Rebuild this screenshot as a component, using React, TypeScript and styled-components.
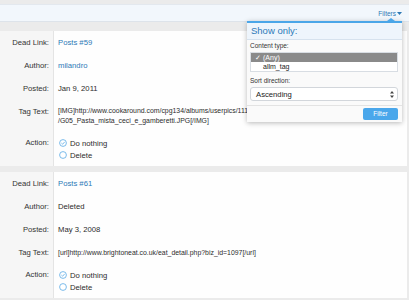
import * as React from "react"
import styled, { createGlobalStyle } from "styled-components"

const GlobalStyle = createGlobalStyle`
  html, body {
    margin: 0;
    padding: 0;
    background: #ebebeb;
    font-family: "Liberation Sans", Arial, sans-serif;
    color: #2c2c2c;
  }
`

const Styled = {
  Page: styled.div`
    position: relative;
    width: 409px;
    height: 300px;
    overflow: hidden;
    padding-top: 4px;
    box-sizing: border-box;
  `,
  FilterBar: styled.div`
    height: 18px;
    box-sizing: border-box;
    background: #f2f7fc;
    border-top: 1px solid #e3e8ee;
    border-bottom: 1px solid #dde3ea;
    display: flex;
    justify-content: flex-end;
    align-items: center;
    padding-right: 7px;
  `,
  FilterToggle: styled.span`
    font-size: 6.5px;
    color: #2d78b4;
    display: flex;
    align-items: center;
    gap: 1px;
  `,
  List: styled.div`
    display: flex;
    flex-direction: column;
    gap: 6px;
    padding-top: 9px;
    width: 407px;
  `,
  Block: styled.div`
    display: grid;
    grid-template-columns: 54px 1fr;
    background: #fefefe;
  `,
  Labels: styled.div`
    grid-column: 1;
    grid-row: 1;
    background: #f6f6f6;
    border-right: 1px solid #e4e4e4;
  `,
  Rows: styled.div`
    display: grid;
    grid-column: 1 / span 2;
    grid-row: 1;
    padding: 6px 0 5px;
  `,
  Row: styled.div<{ $gap: number }>`
    display: grid;
    grid-template-columns: 54px 1fr;
    margin-top: ${(p) => p.$gap}px;
    font-size: 7.7px;
    line-height: 11px;
  `,
  Label: styled.div<{ $tall?: boolean }>`
    text-align: right;
    padding-right: 5px;
    color: #333;
    line-height: ${(p) => (p.$tall ? "12px" : "11px")};
  `,
  Value: styled.div`
    padding-left: 4px;
    white-space: nowrap;
  `,
  TagText: styled.div<{ $tight?: boolean }>`
    padding-left: 4px;
    white-space: nowrap;
    font-size: 6.9px;
    line-height: ${(p) => (p.$tight ? "10px" : "11px")};
  `,
  Link: styled.span`
    color: #2b79b7;
  `,
  Radio: styled.div`
    display: flex;
    align-items: center;
    gap: 3px;
    height: 12px;
    padding-left: 1px;
  `,
  Popup: styled.div`
    position: absolute;
    left: 247px;
    top: 21px;
    width: 155px;
    background: #fafafa;
    border-top: 2px solid #4aa6e8;
    box-shadow: 0 1px 5px rgba(0, 0, 0, 0.28);
  `,
  Arrow: styled.div`
    position: absolute;
    right: 7px;
    top: -5px;
    width: 0;
    height: 0;
    border-left: 4px solid transparent;
    border-right: 4px solid transparent;
    border-bottom: 3px solid #4aa6e8;
  `,
  PopupHeader: styled.div`
    background: #eef5fc;
    border-bottom: 1px solid #d6e2ee;
    color: #2d7ab8;
    font-size: 9.5px;
    height: 16px;
    line-height: 16px;
    padding-left: 4px;
  `,
  PopupBody: styled.div`
    padding: 1px 4px 0 3px;
    display: flex;
    flex-direction: column;
  `,
  FieldTitle: styled.div<{ $top: number }>`
    font-size: 6.5px;
    color: #333;
    margin-top: ${(p) => p.$top}px;
    height: 9px;
    line-height: 9px;
  `,
  ListBox: styled.div`
    margin-top: 2px;
    height: 20px;
    box-sizing: border-box;
    background: #fff;
    border: 1px solid #d8dde3;
    font-size: 7px;
  `,
  Option: styled.div<{ $selected?: boolean }>`
    position: relative;
    height: 9px;
    line-height: 9px;
    padding-left: 12px;
    background: ${(p) => (p.$selected ? "#8a8a8a" : "#fff")};
    color: ${(p) => (p.$selected ? "#fff" : "#222")};
  `,
  Check: styled.span`
    position: absolute;
    left: 4px;
    top: 0;
  `,
  Select: styled.div`
    margin-top: 2px;
    height: 14px;
    box-sizing: border-box;
    background: #fff;
    border: 1px solid #d2d6db;
    border-radius: 3px;
    display: flex;
    align-items: center;
    justify-content: space-between;
    padding: 0 3px 0 5px;
    font-size: 7.7px;
    color: #222;
  `,
  Footer: styled.div`
    border-top: 1px solid #e3e3e3;
    margin-top: 4px;
    padding: 2px 4px 2px;
    display: flex;
    justify-content: flex-end;
  `,
  Button: styled.div`
    width: 35px;
    height: 12px;
    line-height: 12px;
    background: #4aa7eb;
    color: #fff;
    font-size: 6.5px;
    text-align: center;
    border-radius: 2px;
  `,
}

const RadioIcon = ({ checked }: { checked?: boolean }) => (
  <svg width="8" height="8" viewBox="0 0 8 8">
    <circle cx="4" cy="4" r="3.4" fill="#fff" stroke="#6cb3e8" strokeWidth="0.9" />
    {checked ? (
      <path d="M2.4 4.1 L3.6 5.2 L5.7 2.9" fill="none" stroke="#6cb3e8" strokeWidth="0.9" />
    ) : null}
  </svg>
)

const UpDownIcon = () => (
  <svg width="4" height="7" viewBox="0 0 4 7">
    <path d="M2 0 L4 2.6 L0 2.6 Z M2 7 L4 4.4 L0 4.4 Z" fill="#444" />
  </svg>
)

type Entry = {
  post: string
  author: string
  authorLink?: boolean
  posted: string
  tag: string[]
}

const entries: Entry[] = [
  {
    post: "Posts #59",
    author: "milandro",
    authorLink: true,
    posted: "Jan 9, 2011",
    tag: [
      "[IMG]http://www.cookaround.com/cpg134/albums/userpics/11153",
      "/G05_Pasta_mista_ceci_e_gamberetti.JPG[/IMG]",
    ],
  },
  {
    post: "Posts #61",
    author: "Deleted",
    posted: "May 3, 2008",
    tag: ["[url]http://www.brightoneat.co.uk/eat_detail.php?biz_id=1097[/url]"],
  },
]

const LinkBlock = ({ entry }: { entry: Entry }) => (
  <Styled.Block>
    <Styled.Labels />
    <Styled.Rows>
      <Styled.Row $gap={0}>
        <Styled.Label>Dead Link:</Styled.Label>
        <Styled.Value>
          <Styled.Link>{entry.post}</Styled.Link>
        </Styled.Value>
      </Styled.Row>
      <Styled.Row $gap={12}>
        <Styled.Label>Author:</Styled.Label>
        <Styled.Value>
          {entry.authorLink ? <Styled.Link>{entry.author}</Styled.Link> : entry.author}
        </Styled.Value>
      </Styled.Row>
      <Styled.Row $gap={12}>
        <Styled.Label>Posted:</Styled.Label>
        <Styled.Value>{entry.posted}</Styled.Value>
      </Styled.Row>
      <Styled.Row $gap={12}>
        <Styled.Label>Tag Text:</Styled.Label>
        <Styled.TagText $tight={entry.tag.length > 1}>
          {entry.tag.map((line) => (
            <div key={line}>{line}</div>
          ))}
        </Styled.TagText>
      </Styled.Row>
      <Styled.Row $gap={11}>
        <Styled.Label $tall>Action:</Styled.Label>
        <Styled.Value>
          <Styled.Radio>
            <RadioIcon checked />
            Do nothing
          </Styled.Radio>
          <Styled.Radio>
            <RadioIcon />
            Delete
          </Styled.Radio>
        </Styled.Value>
      </Styled.Row>
    </Styled.Rows>
  </Styled.Block>
)

export default function App() {
  return (
    <>
      <GlobalStyle />
      <Styled.Page>
        <Styled.FilterBar>
          <Styled.FilterToggle>
            Filters
            <svg width="5" height="3" viewBox="0 0 5 3">
              <path d="M0 0 L5 0 L2.5 3 Z" fill="#2d78b4" />
            </svg>
          </Styled.FilterToggle>
        </Styled.FilterBar>
        <Styled.List>
          {entries.map((e) => (
            <LinkBlock key={e.post} entry={e} />
          ))}
        </Styled.List>
        <Styled.Popup>
          <Styled.Arrow />
          <Styled.PopupHeader>Show only:</Styled.PopupHeader>
          <Styled.PopupBody>
            <Styled.FieldTitle $top={0}>Content type:</Styled.FieldTitle>
            <Styled.ListBox>
              <Styled.Option $selected>
                <Styled.Check>✓</Styled.Check>(Any)
              </Styled.Option>
              <Styled.Option>allm_tag</Styled.Option>
            </Styled.ListBox>
            <Styled.FieldTitle $top={4}>Sort direction:</Styled.FieldTitle>
            <Styled.Select>
              Ascending
              <UpDownIcon />
            </Styled.Select>
          </Styled.PopupBody>
          <Styled.Footer>
            <Styled.Button>Filter</Styled.Button>
          </Styled.Footer>
        </Styled.Popup>
      </Styled.Page>
    </>
  )
}
